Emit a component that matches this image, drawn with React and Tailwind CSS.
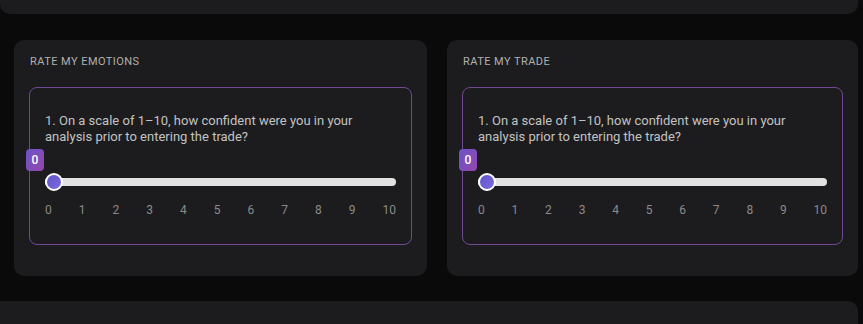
import React from "react";

const ticks = [0, 1, 2, 3, 4, 5, 6, 7, 8, 9, 10];

function RatingCard({ title, question, value }) {
  return (
    <div className="bg-[#1c1c1e] rounded-[10px] px-[15px] pt-4 pb-[31px]">
      <h3 className="text-[11px] leading-3 uppercase tracking-[0.45px] text-[#b0b0b0] pl-px mb-[19px]">
        {title}
      </h3>
      <div className="border border-[#6f4a93] rounded-lg px-[15px] pt-[25px] pb-[26px]">
        <p className="text-[13px] leading-4 text-[#c2c2c2] pr-6">{question}</p>
        <div className="relative h-[18px] mt-[28px]">
          <div className="absolute left-0 right-0 top-[5px] h-2 rounded-full bg-[#e2e2e2]" />
          <div className="absolute left-0 top-0 w-[18px] h-[18px] rounded-full border-2 border-white bg-gradient-to-br from-[#5f56c9] to-[#7d6ae0]" />
          <div className="absolute left-[-19px] top-[-24px] w-[18px] h-[22px] rounded-[4px] bg-gradient-to-br from-[#6a52c8] to-[#9446ad] flex items-center justify-center text-white text-[12px] font-medium">
            {value}
          </div>
        </div>
        <div className="flex justify-between mt-[11px] text-[12px] leading-4 text-[#8a8a8a]">
          {ticks.map(t => (
            <span key={t}>{t}</span>
          ))}
        </div>
      </div>
    </div>
  );
}

export default function App() {
  const q = "1. On a scale of 1–10, how confident were you in your analysis prior to entering the trade?";
  return (
    <div className="w-[863px] h-[324px] overflow-hidden bg-[#0a0a0b]" style={{ fontFamily: "Roboto, 'Noto Sans', sans-serif" }}>
      <div className="w-[858px]">
        <div className="h-[14px] bg-[#1c1c1e] rounded-b-[10px]" />
        <div className="grid grid-cols-[413px_411px] gap-5 pl-[14px] mt-[26px]">
          <RatingCard title="Rate my emotions" question={q} value={0} />
          <RatingCard title="Rate my trade" question={q} value={0} />
        </div>
        <div className="h-[40px] bg-[#1c1c1e] rounded-t-[10px] rounded-tl-none mt-[25px]" />
      </div>
    </div>
  );
}
